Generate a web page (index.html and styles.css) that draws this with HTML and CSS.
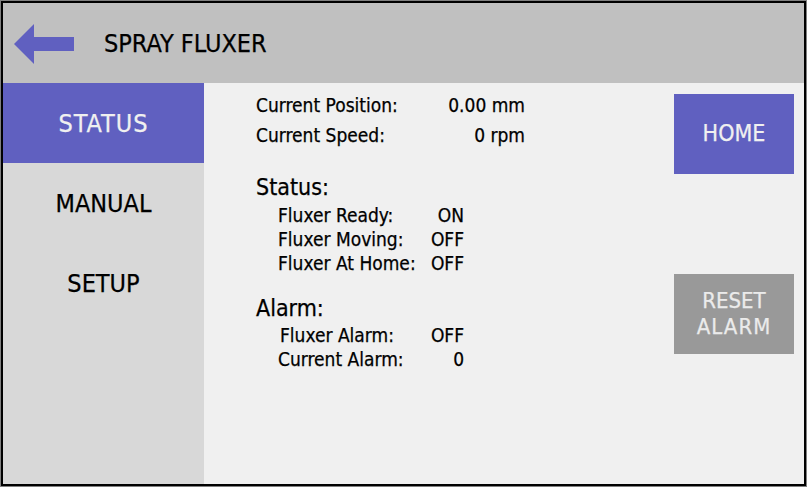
FILE: index.html
```html
<!DOCTYPE html>
<html>
<head>
<meta charset="utf-8">
<link rel="stylesheet" href="styles.css">
</head>
<body>
<div class="frame">
  <div class="screen">
    <header class="header">
      <svg class="back" width="60" height="40" viewBox="0 0 60 40">
        <polygon points="0,20 20,0 20,13 60,13 60,27 20,27 20,40" fill="#6060c0"/>
      </svg>
      <div class="title">SPRAY FLUXER</div>
    </header>
    <div class="body">
      <nav class="sidebar">
        <div class="nav-item active">STATUS</div>
        <div class="nav-item">MANUAL</div>
        <div class="nav-item">SETUP</div>
      </nav>
      <main class="main">
        <div class="info">
          <div class="kv top">
            <span>Current Position:</span><span class="val">0.00 mm</span>
            <span>Current Speed:</span><span class="val">0 rpm</span>
          </div>
          <div class="heading status-h">Status:</div>
          <div class="kv sub status-list">
            <span>Fluxer Ready:</span><span class="val">ON</span>
            <span>Fluxer Moving:</span><span class="val">OFF</span>
            <span>Fluxer At Home:</span><span class="val">OFF</span>
          </div>
          <div class="heading alarm-h">Alarm:</div>
          <div class="kv sub alarm-list">
            <span class="shift">Fluxer Alarm:</span><span class="val">OFF</span>
            <span>Current Alarm:</span><span class="val">0</span>
          </div>
        </div>
        <div class="buttons">
          <div class="btn home">HOME</div>
          <div class="btn reset"><div class="label">RESET<br><span class="wide">ALARM</span></div></div>
        </div>
      </main>
    </div>
  </div>
</div>
</body>
</html>
```

FILE: styles.css
```css
html, body {
  margin: 0;
  padding: 0;
}
body {
  font-family: "DejaVu Sans", "Open Sans", sans-serif;
  font-stretch: condensed;
  color: #000;
  -webkit-text-stroke: 0.25px currentColor;
}
.frame {
  width: 807px;
  height: 487px;
  box-sizing: border-box;
  border: 1px solid #808080;
}
.screen {
  height: 100%;
  box-sizing: border-box;
  border: 2px solid #000;
  display: flex;
  flex-direction: column;
}
.header {
  height: 80px;
  flex: none;
  background: #c0c0c0;
  display: flex;
  align-items: center;
  padding-left: 11px;
  gap: 30px;
}
.back {
  display: block;
  margin-top: 2px;
}
.title {
  font-size: 25px;
  margin-top: 1px;
}
.body {
  flex: 1;
  display: grid;
  grid-template-columns: 201px 1fr;
}
.sidebar {
  background: #d8d8d8;
}
.nav-item {
  height: 80px;
  display: flex;
  align-items: center;
  justify-content: center;
  font-size: 25px;
}
.nav-item.active {
  background: #6060c0;
  color: #f0f0f0;
  letter-spacing: 1px;
}
.main {
  background: #f0f0f0;
  display: flex;
  padding-left: 52px;
  padding-right: 10px;
}
.info {
  padding-top: 7px;
}
.kv {
  display: grid;
  grid-template-columns: 1fr auto;
  font-size: 19px;
}
.kv.top {
  width: 269px;
  line-height: 30px;
}
.kv.sub {
  width: 186px;
  margin-left: 22px;
  line-height: 24px;
}
.val {
  text-align: right;
}
.shift {
  padding-left: 2px;
}
.heading {
  font-size: 23px;
  line-height: 28px;
}
.status-h {
  margin-top: 23px;
}
.status-list {
  margin-top: 2px;
}
.alarm-h {
  margin-top: 19px;
}
.alarm-list {
  margin-top: 1px;
}
.buttons {
  margin-left: auto;
  padding-top: 11px;
  display: flex;
  flex-direction: column;
  gap: 100px;
}
.btn {
  width: 120px;
  height: 80px;
  display: flex;
  align-items: center;
  justify-content: center;
  text-align: center;
  color: #f0f0f0;
}
.home {
  background: #6060c0;
  font-size: 23px;
  padding-bottom: 2px;
  box-sizing: border-box;
}
.reset {
  background: #999999;
  font-size: 22px;
  line-height: 26px;
  color: #ebebeb;
}
.wide {
  letter-spacing: 1px;
}
```
